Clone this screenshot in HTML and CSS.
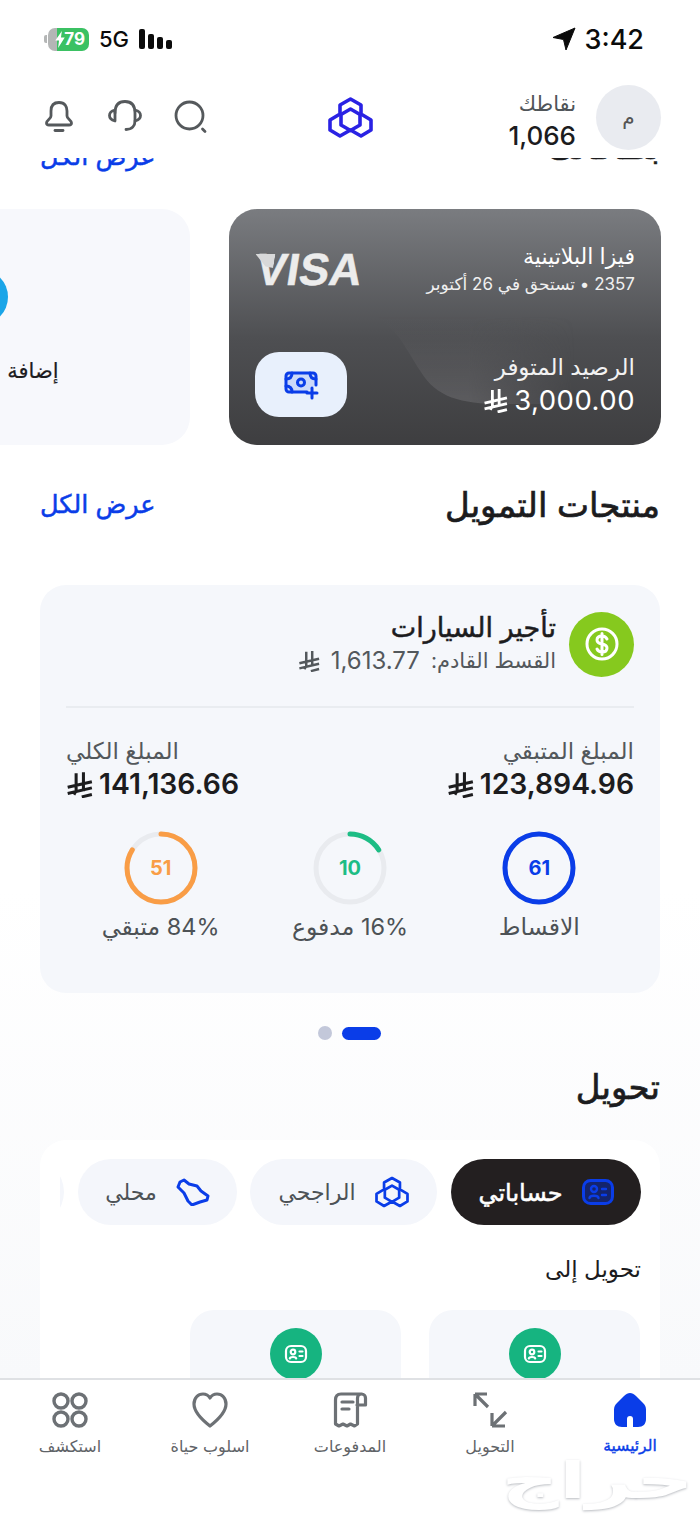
FILE: index.html
```html
<!DOCTYPE html>
<html lang="ar" dir="rtl">
<head>
<meta charset="utf-8">
<title>الرئيسية</title>
<link rel="stylesheet" href="styles.css">
</head>
<body>
<svg class="defs" width="0" height="0" aria-hidden="true">
  <symbol id="sar" viewBox="0 0 24 24">
    <path d="M9 2v15.5L7 21M15.5 1v17M1.500 14.500 23 9.500M1.500 20 23 15M14 23l9-2.200" fill="none" stroke="currentColor" stroke-width="2.700"/>
  </symbol>
  <symbol id="logo" viewBox="0 0 45 41">
    <g fill="none" stroke="currentColor" stroke-width="3.600" stroke-linejoin="round">
      <path d="M22.500 2 33 8v9l10 6v10l-10 6-10.500-6L12 39 2 33V23l10-6V8z"/>
      <path d="M22.500 12 32 17.500V28l-9.500 5.500L13 28V17.500z"/>
    </g>
  </symbol>
  <symbol id="idcard" viewBox="0 0 24 24">
    <g fill="none" stroke="currentColor" stroke-width="2.200" stroke-linecap="round">
      <rect x="2" y="4" width="20" height="16" rx="5"/>
      <circle cx="9" cy="10" r="2.300"/>
      <path d="M5.800 16.500c.5-2 5.900-2 6.400 0M15.500 9.500h3M15.500 14h3"/>
    </g>
  </symbol>
</svg>

<div class="app">
  <div class="status">
    <div class="status-time">
      <span class="time">3:42</span>
      <svg class="loc" viewBox="0 0 24 24"><path d="M23 1 1 10.500l10.500 2L14 23z" fill="#0b0b0b" stroke="#0b0b0b" stroke-linejoin="round"/></svg>
    </div>
    <div class="status-net">
      <div class="bars"><i class="b1"></i><i class="b2"></i><i class="b3"></i><i class="b4"></i></div>
      <span class="net">5G</span>
      <div class="battery">
        <span class="batt-num">79</span>
        <svg class="bolt" viewBox="0 0 10 18"><path d="M7 0 0 10h4l-1 8 7-11H6z" fill="#fff"/></svg>
        <i class="nub"></i>
      </div>
    </div>
  </div>

  <header class="top">
    <div class="profile">
      <div class="avatar">م</div>
      <div class="points">
        <span class="points-label">نقاطك</span>
        <span class="points-num">1,066</span>
      </div>
    </div>
    <svg class="logo"><use href="#logo"/></svg>
    <div class="actions">
      <svg class="act" viewBox="0 0 34 34" fill="none" stroke="#55595c" stroke-width="2.800" stroke-linecap="round">
        <circle cx="16.500" cy="15.500" r="13.500"/><path d="M29.500 29l2.500 2.500"/>
      </svg>
      <svg class="act" viewBox="0 0 34 34" fill="none" stroke="#55595c" stroke-width="2.800" stroke-linecap="round" stroke-linejoin="round">
        <path d="M7 13C7 5 11 1.500 17 1.500S27 5 27 13v8c0 5-3 8.500-9 8.500"/>
        <path d="M7 10c-4 1-5.500 3-5.500 5.500S3 20 7 21zM27 10c4 1 5.500 3 5.500 5.500S31 20 27 21"/>
      </svg>
      <svg class="act-bell" viewBox="0 0 28 32" fill="none" stroke="#55595c" stroke-width="2.800" stroke-linecap="round" stroke-linejoin="round">
        <path d="M14 1.500C8 1.500 6 5.500 6 10v5c0 3-4.500 4-4.500 7 0 1.500 1 2 2.500 2h20c1.500 0 2.500-.5 2.500-2 0-3-4.500-4-4.500-7v-5c0-4.500-2-8.500-8-8.500z"/>
        <path d="M10 29.500h8"/>
      </svg>
    </div>
  </header>

  <main class="scroll">
    <div class="sec-head clipped">
      <h2 class="sec-title">بطاقاتك</h2>
      <a class="sec-link">عرض الكل</a>
    </div>

    <div class="cards">
      <article class="visa">
        <div class="visa-wave"></div>
        <div class="visa-top">
          <div class="visa-info">
            <div class="visa-name">فيزا البلاتينية</div>
            <div class="visa-sub">2357 • تستحق في 26 أكتوبر</div>
          </div>
          <div class="visa-logo">VISA</div>
        </div>
        <div class="visa-bottom">
          <div class="visa-info">
            <div class="visa-label">الرصيد المتوفر</div>
            <div class="visa-amt"><span>3,000.00</span><svg class="sar-lg"><use href="#sar"/></svg></div>
          </div>
          <button class="visa-btn">
            <svg viewBox="0 0 36 30" width="36" height="30" fill="none" stroke="#0a3de8" stroke-width="3" stroke-linecap="round">
              <path d="M24 22H6a3 3 0 0 1-3-3V6a3 3 0 0 1 3-3h24a3 3 0 0 1 3 3v9" fill="#0a3de8" fill-opacity=".12"/>
              <circle cx="18" cy="12.500" r="3.500"/>
              <path d="M3 9c4 0 6-2 6-6M33 9c-4 0-6-2-6-6M3 16c4 0 6 2 6 6M29 18v10M24 23h10"/>
            </svg>
          </button>
        </div>
      </article>
      <article class="add">
        <div class="add-dot"></div>
        <div class="add-label">إضافة</div>
      </article>
    </div>

    <div class="sec-head fin-head">
      <h2 class="sec-title">منتجات التمويل</h2>
      <a class="sec-link">عرض الكل</a>
    </div>

    <section class="fin">
      <div class="fin-top">
        <div class="fin-icon">
          <svg viewBox="0 0 36 36" width="36" height="36" fill="none" stroke="#fff" stroke-width="3" stroke-linecap="round">
            <circle cx="18" cy="18" r="15"/>
            <path d="M23 13c-1-2-3-3-5-3-3 0-5 1.500-5 4s2 3.500 5 4 5 1.500 5 4-2 4-5 4c-2 0-4-1-5-3M18 7.500v21"/>
          </svg>
        </div>
        <div>
          <div class="fin-title">تأجير السيارات</div>
          <div class="fin-next"><span>القسط القادم:</span> <span class="num">1,613.77</span> <svg class="sar-sm"><use href="#sar"/></svg></div>
        </div>
      </div>
      <div class="divider"></div>
      <div class="amounts">
        <div>
          <div class="amt-label">المبلغ المتبقي</div>
          <div class="amt"><span>123,894.96</span><svg class="sar-md"><use href="#sar"/></svg></div>
        </div>
        <div class="amt-end">
          <div class="amt-label">المبلغ الكلي</div>
          <div class="amt"><span>141,136.66</span><svg class="sar-md"><use href="#sar"/></svg></div>
        </div>
      </div>
      <div class="rings">
        <div class="ring-item">
          <div class="ring ring-blue">
            <svg viewBox="0 0 76 76"><circle class="track" cx="38" cy="38" r="34"/><circle class="arc" cx="38" cy="38" r="34" pathLength="100" stroke-dasharray="100 0"/></svg>
            <b>61</b>
          </div>
          <div class="ring-label">الاقساط</div>
        </div>
        <div class="ring-item">
          <div class="ring ring-green">
            <svg viewBox="0 0 76 76"><circle class="track" cx="38" cy="38" r="34"/><circle class="arc" cx="38" cy="38" r="34" pathLength="100" stroke-dasharray="16 84"/></svg>
            <b>10</b>
          </div>
          <div class="ring-label">16% مدفوع</div>
        </div>
        <div class="ring-item">
          <div class="ring ring-orange">
            <svg viewBox="0 0 76 76"><circle class="track" cx="38" cy="38" r="34"/><circle class="arc" cx="38" cy="38" r="34" pathLength="100" stroke-dasharray="84 16"/></svg>
            <b>51</b>
          </div>
          <div class="ring-label">84% متبقي</div>
        </div>
      </div>
    </section>

    <div class="dots"><i class="dot-on"></i><i class="dot"></i></div>

    <h2 class="sec-title transfer-title">تحويل</h2>

    <section class="transfer">
      <div class="tabs">
        <div class="tab tab-on">
          <svg class="tab-id" viewBox="0 0 32 26" fill="none" stroke="#0a3de8" stroke-linecap="round">
            <rect x="1.500" y="1.500" width="29" height="23" rx="7" fill="#14246c" stroke-width="3"/>
            <circle cx="12" cy="10" r="3" stroke-width="2.400"/>
            <path d="M7.500 19c.5-3 8.500-3 9 0M20 10h4M20 16h4" stroke-width="2.400"/>
          </svg>
          <span>حساباتي</span>
        </div>
        <div class="tab tab-2">
          <svg class="tab-logo"><use href="#logo"/></svg>
          <span>الراجحي</span>
        </div>
        <div class="tab tab-3">
          <svg class="ksa" viewBox="0 0 34 28"><path d="M4 4 8 2l5 4 8 2 4 5 7 5-1 4-7 2-8 3-4-4-4-8-6-6z" fill="none" stroke="#0a3de8" stroke-width="3" stroke-linejoin="round"/></svg>
          <span>محلي</span>
        </div>
        <div class="tab tab-4"></div>
      </div>
      <div class="to-label">تحويل إلى</div>
      <div class="tiles">
        <div class="tile"><span class="tile-ico"><svg viewBox="0 0 24 24" width="24" height="24"><use href="#idcard"/></svg></span></div>
        <div class="tile"><span class="tile-ico"><svg viewBox="0 0 24 24" width="24" height="24"><use href="#idcard"/></svg></span></div>
      </div>
    </section>
  </main>

  <nav class="tabbar">
    <a class="nav nav-on">
      <svg viewBox="0 0 36 36"><path d="M18 1c2 0 4 1 6 3l7 7c2 2 3 4 3 6.500V27c0 5-3 8-8 8H10c-5 0-8-3-8-8v-9.500C2 15 3 13 5 11l7-7c2-2 4-3 6-3z" fill="#0a3de8"/><path d="M15 35v-8a3 3 0 0 1 6 0v8z" fill="#fff"/></svg>
      <span>الرئيسية</span>
    </a>
    <a class="nav">
      <svg viewBox="0 0 36 36" fill="none" stroke="#6d7175" stroke-width="3.200"><path d="M3 2h12M3 2v12M3 2l13 13" /><path d="M33 34H20M20 34V21M20 34l14-14"/></svg>
      <span>التحويل</span>
    </a>
    <a class="nav">
      <svg viewBox="0 0 36 36" fill="none" stroke="#6d7175" stroke-width="3.200" stroke-linecap="round" stroke-linejoin="round"><path d="M30 2H9C5 2 3.500 4.500 3.500 8v24l3.500 2 4-2 4 2 3.500-2 4 2 3-2V6c0-2 1.500-4 4-4s4 2 4 4v7h-8.500"/><path d="M10 10h11M10 17h7"/></svg>
      <span>المدفوعات</span>
    </a>
    <a class="nav">
      <svg viewBox="0 0 36 36" fill="none" stroke="#6d7175" stroke-width="3.200" stroke-linejoin="round"><path d="M18 34C9 27 2 20 2 12 2 6 6 2 11 2c3 0 5.500 1.500 7 4 1.500-2.500 4-4 7-4 5 0 9 4 9 10 0 8-7 15-16 22z"/></svg>
      <span>اسلوب حياة</span>
    </a>
    <a class="nav">
      <svg viewBox="0 0 36 36" fill="none" stroke="#6d7175" stroke-width="3.400"><rect x="2" y="2" width="14" height="14" rx="7"/><rect x="20" y="2" width="14" height="14" rx="7"/><rect x="2" y="20" width="14" height="14" rx="7"/><rect x="20" y="20" width="14" height="14" rx="7"/></svg>
      <span>استكشف</span>
    </a>
    <div class="watermark">حراج</div>
  </nav>
</div>
</body>
</html>
```
FILE: styles.css
```css
* { box-sizing: border-box; margin: 0; padding: 0; }
html, body { width: 700px; height: 1514px; background: #fff; overflow: hidden; }
body { font-family: "Inter", "DejaVu Sans", sans-serif; color: #1c1c1e; }
.defs { position: absolute; }
i { display: block; }

.app { width: 700px; height: 1514px; display: flex; flex-direction: column; overflow: hidden; }

/* status bar */
.status { height: 80px; flex: none; display: flex; justify-content: space-between; align-items: center; padding: 0 56px 2px 48px; }
.status-time { display: flex; align-items: center; gap: 9px; }
.time { font-size: 27px; font-weight: 500; color: #0b0b0b; direction: ltr; }
.loc { width: 24px; height: 24px; }
.status-net { display: flex; align-items: center; direction: ltr; flex-direction: row-reverse; gap: 10px; }
.net { font-size: 22px; font-weight: 500; color: #0b0b0b; }
.bars { display: flex; align-items: flex-end; gap: 3px; height: 20px; }
.bars i { width: 6px; background: #0b0b0b; border-radius: 2px; }
.bars .b1 { height: 20px; }
.bars .b2 { height: 15px; }
.bars .b3 { height: 12px; }
.bars .b4 { height: 9px; width: 6px; }
.battery { position: relative; width: 41px; height: 23px; border-radius: 7px; background: linear-gradient(90deg, #b4b6b6 0 22%, #3bc163 22%); display: flex; align-items: center; justify-content: flex-end; padding-right: 4px; }
.batt-num { font-size: 17px; font-weight: 700; color: #fff; }
.bolt { position: absolute; left: 7px; top: 3px; width: 10px; height: 17px; }
.nub { position: absolute; left: -4px; top: 7px; width: 3px; height: 8px; border-radius: 2px 0 0 2px; background: #b4b6b6; }

/* header */
.top { height: 78px; flex: none; display: grid; grid-template-columns: 1fr auto 1fr; align-items: center; padding: 0 39px 4px; position: relative; background: #fff; z-index: 2; }
.profile { display: flex; align-items: center; gap: 20px; }
.avatar { width: 65px; height: 65px; border-radius: 50%; background: #e9ebf0; color: #555; display: flex; align-items: center; justify-content: center; font-size: 20px; }
.points { display: flex; flex-direction: column; gap: 3px; padding-top: 8px; }
.points-label { font-size: 21px; color: #505559; line-height: 26px; }
.points-num { font-size: 26px; font-weight: 500; color: #1c1c1e; line-height: 32px; }
.logo { width: 45px; height: 41px; color: #2a22e4; }
.actions { display: flex; justify-content: flex-end; gap: 31px; align-items: center; padding-left: 6px; }
.act { width: 34px; height: 34px; }
.act-bell { width: 28px; height: 32px; margin-right: 4px; }

/* scroll */
.scroll { flex: 1; min-height: 0; overflow: hidden; background: linear-gradient(180deg, #fff 60%, #f8f9fb 100%); }
.sec-head { display: flex; justify-content: space-between; align-items: center; height: 40px; padding: 0 40px; }
.clipped { margin-top: -25px; }
.clipped .sec-title { transform: translateY(-6px); }
.clipped .sec-link { transform: translateY(4px); }
.sec-title { font-size: 34px; font-weight: 400; -webkit-text-stroke: .7px currentColor; line-height: 40px; color: #1c1c1e; }
.sec-link { font-size: 25.5px; font-weight: 400; -webkit-text-stroke: .5px currentColor; color: #0a3de8; padding-bottom: 3px; }

/* cards */
.cards { display: flex; gap: 39px; padding: 0 39px 0 0; margin-top: 36px; overflow: hidden; }
.visa { position: relative; flex: none; width: 432px; height: 236px; border-radius: 28px; background: linear-gradient(180deg, #7a7c80 0%, #4e4f52 55%, #3e3e40 100%); color: #fff; padding: 32px 26px 28px; display: flex; flex-direction: column; justify-content: space-between; overflow: hidden; }
.visa-wave { position: absolute; right: 0; bottom: 41px; width: 310px; height: 92px; background: linear-gradient(0deg, #5c5c5f, rgba(92,92,95,0) 95%); clip-path: path("M0 0C40 0 50 30 70 60C85 85 110 92 150 92H310V0Z"); -webkit-mask-image: linear-gradient(90deg, #000 38%, transparent 72%); mask-image: linear-gradient(90deg, #000 38%, transparent 72%); }
.visa-top, .visa-bottom { position: relative; display: flex; justify-content: space-between; align-items: flex-start; }
.visa-bottom { align-items: flex-end; }
.visa-name { font-size: 22px; line-height: 30px; }
.visa-sub { font-size: 17px; line-height: 26px; color: #f0f0f0; }
.visa-logo { position: relative; font-family: "Liberation Sans", sans-serif; font-size: 45px; font-weight: 700; -webkit-text-stroke: .5px #ececec; color: #ececec; line-height: 50px; margin-top: 4px; margin-left: 2px; transform: skewX(-9deg); }
.visa-logo::before { content: ""; position: absolute; left: -4px; top: 9px; width: 20px; height: 14px; background: #d8d8d9; clip-path: polygon(0 0, 100% 0, 100% 100%, 60% 90%); }
.visa-label { font-size: 23px; line-height: 32px; color: #f2f2f2; }
.visa-amt { display: flex; align-items: center; gap: 6px; font-size: 27.5px; font-weight: 400; line-height: 34px; letter-spacing: .5px; }
.sar-lg { width: 25px; height: 25px; color: #fff; }
.visa-btn { width: 92px; height: 65px; border: 0; border-radius: 24px; background: #e8f0fc; display: flex; align-items: center; justify-content: center; }
.add { flex: none; width: 420px; height: 236px; border-radius: 28px; background: #f7f8fc; display: flex; flex-direction: column; align-items: center; padding-top: 60px; }
.add-dot { width: 56px; height: 56px; border-radius: 50%; background: #1aa5e8; }
.add-label { font-size: 21px; margin-top: 33px; margin-left: 106px; -webkit-text-stroke: .2px currentColor; }

.fin-head { margin-top: 40px; }

/* financing */
.fin { margin: 60px 40px 0; height: 408px; border-radius: 26px; background: #f5f7fb; padding: 26px 26px 0; }
.fin-top { display: flex; align-items: center; gap: 13px; }
.fin-icon { width: 65px; height: 65px; border-radius: 50%; background: #86c91e; display: flex; align-items: center; justify-content: center; flex: none; }
.fin-title { font-size: 27px; font-weight: 400; -webkit-text-stroke: .5px currentColor; line-height: 34px; color: #1c1c1e; }
.fin-next { display: flex; align-items: center; gap: 11px; font-size: 21px; line-height: 32px; color: #53585c; }
.num { font-size: 24px; }
.sar-sm { width: 22px; height: 22px; color: #53585c; }
.divider { height: 2px; background: #e9ecf0; margin-top: 29px; }
.amounts { display: flex; justify-content: space-between; margin-top: 28px; }
.amt-label { font-size: 23px; line-height: 30px; color: #53585c; white-space: nowrap; }
.amt-end .amt-label { text-align: left; }
.amt { display: flex; align-items: center; gap: 6px; font-size: 28.3px; font-weight: 600; line-height: 36px; color: #1c1c1e; }
.sar-md { width: 27px; height: 27px; color: #1c1c1e; }
.rings { display: grid; grid-template-columns: repeat(3, 1fr); margin-top: 28px; }
.ring-item { display: flex; flex-direction: column; align-items: center; }
.ring { position: relative; width: 76px; height: 76px; display: flex; align-items: center; justify-content: center; }
.ring svg { position: absolute; inset: 0; width: 76px; height: 76px; transform: rotate(-90deg); }
.track { fill: none; stroke: #e9ebef; stroke-width: 5; }
.arc { fill: none; stroke-width: 5; stroke-linecap: round; }
.ring b { font-size: 20px; font-weight: 700; }
.ring-blue .arc { stroke: #0a3de8; }
.ring-blue b { color: #0a3de8; }
.ring-green .arc { stroke: #1dbd85; }
.ring-green b { color: #1dbd85; }
.ring-orange .arc { stroke: #f99d46; }
.ring-orange b { color: #f99d46; }
.ring-label { font-size: 23.5px; line-height: 34px; color: #4d5256; margin-top: 4px; }

.dots { display: flex; justify-content: center; align-items: center; gap: 10px; margin-top: 33px; padding-right: 2px; }
.dot-on { width: 39px; height: 13px; border-radius: 7px; background: #0a3de8; }
.dot { width: 14px; height: 14px; border-radius: 50%; background: #c3c8da; }

.transfer-title { margin: 27px 40px 0 0; }

/* transfer */
.transfer { margin: 33px 40px 0; background: #fff; border-radius: 26px 26px 0 0; padding: 19px 19px 0 20px; height: 260px; }
.tabs { display: flex; gap: 14px; overflow: hidden; }
.tab { flex: none; height: 66px; border-radius: 33px; background: #f4f6fb; display: flex; align-items: center; justify-content: center; gap: 19px; font-size: 22px; color: #4d5256; }
.tab-on { width: 190px; background: #231f20; color: #fff; font-size: 24px; -webkit-text-stroke: .5px currentColor; }
.tab-id { width: 32px; height: 26px; flex: none; }
.tab-2 { width: 187px; }
.tab-3 { width: 159px; margin-right: -1px; }
.tab-4 { width: 100px; }
.tab-logo { width: 34px; height: 32px; color: #0a3de8; }
.ksa { width: 34px; height: 28px; }
.to-label { font-size: 23px; line-height: 34px; margin-top: 27px; color: #1c1c1e; }
.tiles { display: flex; gap: 28px; margin-top: 24px; margin-right: 1px; }
.tile { width: 211px; height: 120px; border-radius: 24px; background: #f5f7fb; display: flex; justify-content: center; padding-top: 18px; }
.tile-ico { width: 52px; height: 52px; border-radius: 50%; background: #16b480; color: #fff; display: flex; align-items: center; justify-content: center; }

/* tab bar */
.tabbar { position: relative; flex: none; height: 136px; background: #fff; border-top: 2px solid #dfe1e4; display: grid; grid-template-columns: repeat(5, 140px); padding-top: 12px; z-index: 2; }
.nav { display: flex; flex-direction: column; align-items: center; gap: 7px; font-size: 16px; line-height: 22px; color: #5f6367; height: 70px; }
.nav svg { width: 36px; height: 36px; }
.nav-on { color: #0a3de8; font-size: 15.5px; -webkit-text-stroke: .4px currentColor; }
.watermark { position: absolute; left: 500px; top: 72px; width: 195px; text-align: center; font-size: 50px; line-height: 56px; font-weight: 700; color: #fff; text-shadow: 0 1px 2px #b8bbc0; transform: scaleX(1.6); }
```
